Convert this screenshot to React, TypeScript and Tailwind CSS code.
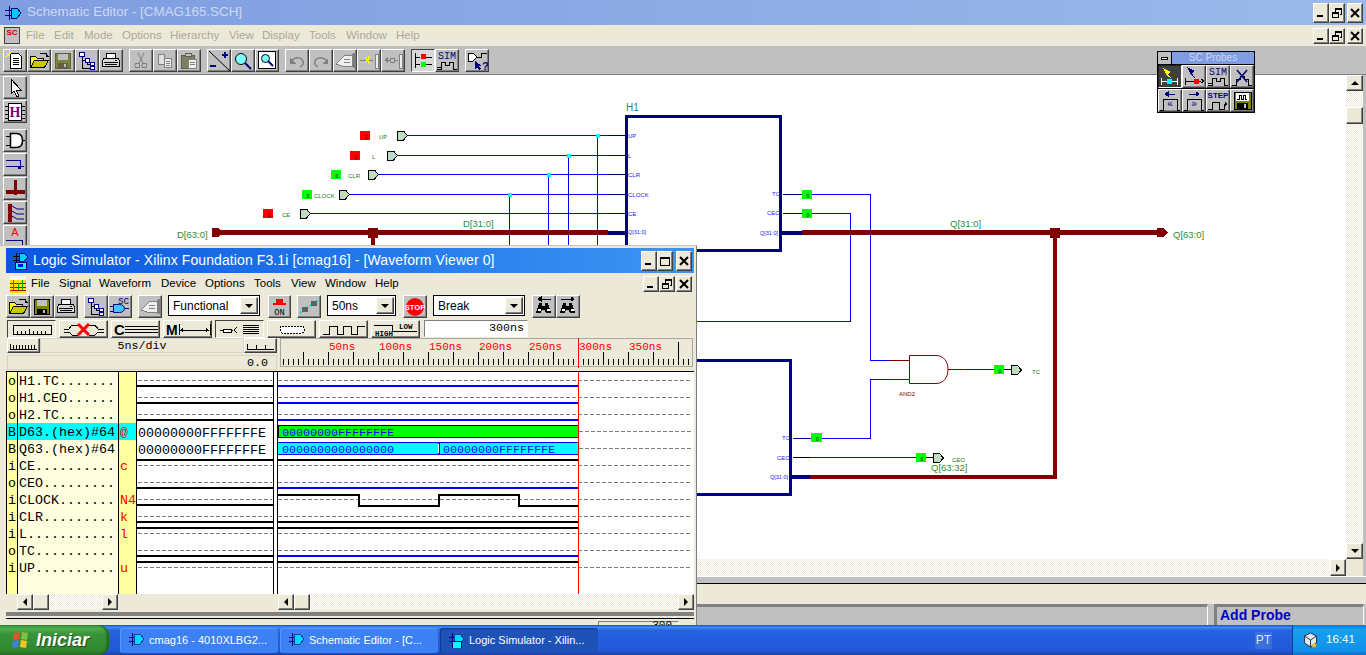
import type { ReactNode } from "react";

const raised =
  "border border-t-white border-l-white border-r-[#404040] border-b-[#404040] shadow-[inset_-1px_-1px_0_#808080]";
const sunken = "border border-t-[#808080] border-l-[#808080] border-r-white border-b-white";
const checker =
  "bg-[repeating-conic-gradient(#ece9d8_0_25%,#ffffff_0_50%)] bg-[length:2px_2px]";
const sans = "font-['Liberation_Sans',sans-serif]";
const mono = "font-['Liberation_Mono',monospace]";

function Ico({ w = 22, h = 21, children }: { w?: number; h?: number; children: ReactNode }) {
  return (
    <svg width={w} height={h} viewBox={`0 0 ${w} ${h}`} shapeRendering="crispEdges" className="block">
      {children}
    </svg>
  );
}

function WinBtn({ kind, small }: { kind: "min" | "max" | "restore" | "close"; small?: boolean }) {
  return (
    <div className={`${raised} bg-[#ece9d8] flex items-center justify-center ${small ? "w-[16px] h-[16px]" : "w-[16px] h-[20px]"}`}>
      <svg width="10" height="10" viewBox="0 0 10 10" shapeRendering="crispEdges">
        {kind === "min" && <rect x="1" y="7" width="6" height="2" fill="#000" />}
        {kind === "max" && <path d="M0.5 1.5h9v8h-9zM0 1h10v1H0z" fill="none" stroke="#000" />}
        {kind === "restore" && (
          <>
            <path d="M3.5 1.5h6v5h-2M3.5 1.5v2" fill="none" stroke="#000" />
            <path d="M3 0h7v2H3z" fill="#000" />
            <rect x="0.5" y="4.5" width="6" height="5" fill="#ece9d8" stroke="#000" />
            <rect x="0" y="4" width="7" height="2" fill="#000" />
          </>
        )}
        {kind === "close" && <path d="M1 1l8 8M9 1l-8 8" stroke="#000" strokeWidth="2" shapeRendering="auto" />}
      </svg>
    </div>
  );
}

function TBtn({ children, pressed, dark, w = "w-[24px]", h = "h-[23px]" }: { children?: ReactNode; pressed?: boolean; dark?: boolean; w?: string; h?: string }) {
  const look = dark
    ? "border border-t-[#202020] border-l-[#202020] border-r-white border-b-white bg-[#404040]"
    : pressed
      ? "border border-t-[#404040] border-l-[#404040] border-r-white border-b-white bg-[#d8d8d8]"
      : `${raised} bg-[#c0c0c0]`;
  return <div className={`${w} ${h} shrink-0 flex items-center justify-center ${look}`}>{children}</div>;
}

// toolbar drawings
const NewIco = () => (
  <Ico>
    <path d="M6.5 3.5h8l3 3v12h-11z" fill="#fff" stroke="#000" />
    <path d="M9 8h6M9 10h6M9 12h6M9 14h6" stroke="#000" />
    <path d="M2 3l4 2M5 0v4M8 1L5 5M1 7l4-2" stroke="#ff0" />
    <rect x="4" y="4" width="2" height="2" fill="#ff0" />
  </Ico>
);
const OpenIco = () => (
  <Ico>
    <path d="M2.5 6.5h5l2 2h6v9h-13z" fill="#ff0" stroke="#000" />
    <path d="M2.5 17.5l4-7h14l-4 7z" fill="#c8c800" stroke="#000" />
    <path d="M12 3h5l3 3M18 3v3h3" fill="none" stroke="#000" />
  </Ico>
);
const SaveIco = ({ c = "#000" }: { c?: string }) => (
  <Ico>
    <path d="M3.5 3.5h15v15h-15z" fill={c === "#000" ? "#808000" : "#808040"} stroke={c} />
    <rect x="6" y="4" width="10" height="6" fill="#c0c0c0" />
    <rect x="6" y="13" width="10" height="5" fill={c} />
    <rect x="12" y="14" width="2" height="3" fill="#c0c0c0" />
  </Ico>
);
const TreeIco = () => (
  <Ico>
    <path d="M6 6v12h10M6 10h5v4h5" fill="none" stroke="#000" />
    <rect x="3.5" y="2.5" width="5" height="4" fill="#fff" stroke="#000080" />
    <rect x="9.5" y="8.5" width="4" height="4" fill="#fff" stroke="#000080" />
    <rect x="14.5" y="12.5" width="4" height="3" fill="#fff" stroke="#000080" />
    <rect x="14.5" y="16.5" width="4" height="3" fill="#fff" stroke="#000080" />
  </Ico>
);
const PrintIco = () => (
  <Ico>
    <path d="M6.5 3.5h9v5h-9z" fill="#fff" stroke="#000" />
    <path d="M3.5 8.5h15l1 3v5h-17v-5z" fill="#d8d8d8" stroke="#000" />
    <path d="M4 12h14M5 14h12" stroke="#000" />
    <rect x="15" y="10" width="2" height="1" fill="#000" />
  </Ico>
);
const CutIco = () => (
  <Ico>
    <path d="M8 3l5 10M14 3L9 13" stroke="#808080" fill="none" shapeRendering="auto" />
    <circle cx="7.5" cy="15.5" r="2.5" fill="none" stroke="#808080" />
    <circle cx="14.5" cy="15.5" r="2.5" fill="none" stroke="#808080" />
  </Ico>
);
const CopyIco = () => (
  <Ico>
    <path d="M4.5 4.5h6v10h-6z" fill="#e0e0e0" stroke="#808080" />
    <path d="M10.5 8.5h7v9h-7z" fill="#f0f0f0" stroke="#808080" />
    <path d="M12 11h4M12 13h4M12 15h4" stroke="#808080" />
  </Ico>
);
const PasteIco = () => (
  <Ico>
    <path d="M3.5 5.5h13v13h-13z" fill="#808060" stroke="#606060" />
    <rect x="7" y="3" width="6" height="3" fill="#c0c0c0" stroke="#606060" />
    <path d="M10.5 9.5h8v9h-8z" fill="#f0f0f0" stroke="#808080" />
    <path d="M12 12h5M12 14h5" stroke="#808080" />
  </Ico>
);
const ScaleIco = () => (
  <Ico>
    <path d="M1 1l21 20" stroke="#000" shapeRendering="auto" />
    <path d="M14 5h6M17 2v6M2 16h6" stroke="#000080" strokeWidth="1.5" />
  </Ico>
);
const MagIco = () => (
  <Ico>
    <circle cx="9" cy="9" r="5.5" fill="#80ffff" stroke="#000" shapeRendering="auto" />
    <path d="M13 13l6 6" stroke="#000080" strokeWidth="2" shapeRendering="auto" />
  </Ico>
);
const MagBoxIco = () => (
  <Ico>
    <rect x="2.5" y="1.5" width="17" height="17" fill="#fff" stroke="#000" />
    <circle cx="9.5" cy="8.5" r="4" fill="#80ffff" stroke="#000" shapeRendering="auto" />
    <path d="M12 11l5 5" stroke="#000080" strokeWidth="2" shapeRendering="auto" />
  </Ico>
);
const UndoIco = ({ flip }: { flip?: boolean }) => (
  <Ico>
    <g transform={flip ? "translate(22 0) scale(-1 1)" : undefined}>
      <path d="M6 10c4-3 9-3 11 1 1 3-1 5-3 6" fill="none" stroke="#808080" strokeWidth="1.5" shapeRendering="auto" />
      <path d="M4 8v6h6z" fill="#808080" />
    </g>
  </Ico>
);
const HandIco = () => (
  <Ico>
    <path d="M2 14l8-8 8-1v11H8z" fill="#eee" stroke="#808080" />
    <path d="M19 3h2v15h-2z" fill="#808080" />
    <path d="M10 9h6M10 12h6" stroke="#808080" />
  </Ico>
);
const StarBarIco = () => (
  <Ico>
    <path d="M2 10h13" stroke="#808080" />
    <path d="M7 7l5 6M12 7l-5 6M10 6v8" stroke="#ff0" />
    <rect x="17" y="4" width="3" height="14" fill="#eee" stroke="#808080" />
  </Ico>
);
const ArrBarIco = () => (
  <Ico>
    <path d="M2 10l4-4v8z" fill="#808080" />
    <path d="M6 10h10" stroke="#808080" />
    <rect x="8" y="8" width="4" height="4" fill="#c0c0c0" stroke="#808080" />
    <rect x="17" y="4" width="3" height="14" fill="#eee" stroke="#808080" />
  </Ico>
);
const LightIco = () => (
  <Ico>
    <path d="M3 3v15M3 7h5M3 14h5M14 7h6M14 14h6" stroke="#000" />
    <rect x="9" y="4" width="5" height="5" fill="#f00" />
    <rect x="9" y="12" width="5" height="5" fill="#0f0" />
  </Ico>
);
const SimIco = ({ label = "SIM" }: { label?: string }) => (
  <Ico>
    <text x="11" y="9" textAnchor="middle" fontSize="10" fontFamily="Liberation Mono" fill="#000080">{label}</text>
    <path d="M1 19h4v-7h4v3h4v-3h4v7h4M1 17h4" fill="none" stroke="#000" />
  </Ico>
);
const QueryIco = () => (
  <Ico>
    <path d="M2 3h5l4 4-4 4H2z" fill="#fff" stroke="#000" />
    <path d="M11 7h4V3h6" fill="none" stroke="#000" />
    <path d="M9 11v8l2-2 2 3 2-1-2-3h3z" fill="#000080" />
    <text x="16" y="20" fontSize="11" fontWeight="700" fontFamily="Liberation Sans" fill="#000080">?</text>
  </Ico>
);

function Probes() {
  return (
    <div className="absolute left-[1157px] top-[51px] w-[98px] h-[62px] bg-black p-px flex flex-col gap-px z-10">
      <div className="flex h-[12px] gap-px">
        <div className="w-[13px] bg-[#c0c0c0] flex items-center justify-center">
          <div className="w-[7px] h-[3px] border border-black bg-white" />
        </div>
        <div className={`flex-1 bg-[#7f9de0] text-[#cdd9f2] text-[10px] leading-[12px] text-center ${sans}`}>SC Probes</div>
      </div>
      <div className="flex">
        <TBtn dark>
          <Ico>
            <path d="M4 2l8 4-3 2 3 4-4-2z" fill="#ff0" />
            <path d="M2 12v7M2 15h16M18 12v7" stroke="#fff" />
            <rect x="8" y="13" width="5" height="5" fill="#0ff" />
          </Ico>
        </TBtn>
        <TBtn>
          <Ico>
            <path d="M4 1l8 4-3 2 3 5-4-3z" fill="#000080" />
            <path d="M2 12v7M2 15h16M18 13l3 2-3 2" fill="none" stroke="#000" />
            <rect x="11" y="13" width="5" height="5" fill="#f00" />
          </Ico>
        </TBtn>
        <TBtn><SimIco /></TBtn>
        <TBtn>
          <Ico>
            <path d="M1 19h4v-6h4v-3h4v3h4v6h4" fill="none" stroke="#000" />
            <path d="M6 4l10 12M16 4L6 16" stroke="#000080" strokeWidth="1.5" shapeRendering="auto" />
          </Ico>
        </TBtn>
      </div>
      <div className="flex">
        <TBtn>
          <Ico>
            <path d="M6 4h10M6 4l3-2v4z" stroke="#000080" />
            <path d="M1 20h3V9h14v11h3" fill="none" stroke="#000" />
            <text x="11" y="17" textAnchor="middle" fontSize="10" fontFamily="Liberation Sans" fill="#000080">«</text>
          </Ico>
        </TBtn>
        <TBtn>
          <Ico>
            <path d="M6 4h10M16 4l-3-2v4z" stroke="#000080" />
            <path d="M1 20h3V9h14v11h3" fill="none" stroke="#000" />
            <text x="11" y="17" textAnchor="middle" fontSize="10" fontFamily="Liberation Sans" fill="#000080">»</text>
          </Ico>
        </TBtn>
        <TBtn>
          <Ico>
            <text x="11" y="8" textAnchor="middle" fontSize="8" fontWeight="700" fontFamily="Liberation Sans" fill="#000080">STEP</text>
            <path d="M1 19h4v-7h7v7h5v-5h2" fill="none" stroke="#000" />
            <path d="M18 12l3 2-3 2z" fill="#000" />
          </Ico>
        </TBtn>
        <TBtn>
          <Ico>
            <rect x="3" y="2" width="17" height="17" fill="#808000" stroke="#000" />
            <rect x="5" y="3" width="13" height="8" fill="#fff" />
            <path d="M6 9h2V5h2v4h2V5h2v4h2" fill="none" stroke="#000" />
            <rect x="6" y="13" width="11" height="6" fill="#000" />
            <rect x="13" y="14" width="2" height="4" fill="#c0c0c0" />
          </Ico>
        </TBtn>
      </div>
    </div>
  );
}

const MiniGate = ({ x, y }: { x: number; y: number }) => (
  <path d={`M${x + 0.5} ${y + 0.5}h6l4 4.5-4 4.5h-6z`} fill="#c0dcc0" stroke="#000" strokeWidth="1" />
);

function Box({ x, y, w = 10, h = 9, on }: { x: number; y: number; w?: number; h?: number; on?: boolean }) {
  return (
    <>
      <rect x={x} y={y} width={w} height={h} fill={on ? "#ff0000" : "#00ff00"} />
      <text x={x + w / 2 + 1} y={y + h - 1} fontSize="5" textAnchor="middle" fill="#000">{on ? "1" : "0"}</text>
    </>
  );
}

const Lbl = ({ x, y, s = 6, c = "#0f7a20", children }: { x: number; y: number; s?: number; c?: string; children: string }) => (
  <text x={x} y={y} fontSize={s} fill={c}>{children}</text>
);

function Schematic() {
  const navy = "#000080";
  const maroon = "#800000";
  const blue = "#0000ff";
  return (
    <svg width="1316" height="484" viewBox="30 75 1316 484" className={`block ${sans}`} shapeRendering="crispEdges">
      {/* H1 */}
      <path d="M626.5 250.5V116.5H780.5V250.5H690" fill="none" stroke={navy} strokeWidth="3" />
      <text x="626" y="111" fontSize="10" fill="#2f8a5a">H1</text>
      {/* inputs */}
      {[
        { y: 135.5, gx: 397, bx: 360, on: true, t: "UP", tx: 379 },
        { y: 155.5, gx: 387, bx: 350, on: true, t: "L", tx: 372 },
        { y: 174.5, gx: 368, bx: 331, on: false, t: "CLR", tx: 348 },
        { y: 194.5, gx: 339, bx: 302, on: false, t: "CLOCK", tx: 314 },
        { y: 213.5, gx: 300, bx: 263, on: true, t: "CE", tx: 282 },
      ].map((p) => (
        <g key={p.t}>
          <path d={`M${p.gx + 10} ${p.y}H608`} stroke={blue} />
          <path d={`M608 ${p.y}H625`} stroke="#000060" />
          <MiniGate x={p.gx} y={p.y - 5} />
          <Box x={p.bx} y={p.y - 5} on={p.on} />
          <Lbl x={p.tx} y={p.y + 3}>{p.t}</Lbl>
          <text x="628" y={p.y + 2} fontSize="6" fill="#2020ff">{p.t}</text>
        </g>
      ))}
      <text x="628" y="234" fontSize="5.5" fill="#2020ff">Q[31:0]</text>
      {[
        { x: 509.5, y: 194.5 },
        { x: 548.5, y: 174.5 },
        { x: 568.5, y: 155.5 },
        { x: 597.5, y: 135.5 },
      ].map((v) => (
        <g key={v.x}>
          <path d={`M${v.x} ${v.y}V250`} stroke={blue} />
          <rect x={v.x - 2} y={v.y - 2} width="4" height="4" fill="#00ffff" />
        </g>
      ))}
      {/* input bus */}
      <path d="M212 228h6l4 3v3l-4 3h-6z" fill={maroon} />
      <rect x="220" y="230" width="388" height="5" fill={maroon} />
      <rect x="608" y="231" width="18" height="4" fill={navy} />
      <rect x="368" y="228" width="10" height="10" fill={maroon} />
      <rect x="371" y="238" width="4" height="10" fill={maroon} />
      <text x="177" y="238" fontSize="9.5" fill="#2f8a3a">D[63:0]</text>
      <text x="463" y="227" fontSize="9.5" fill="#2f8a3a">D[31:0]</text>
      {/* H1 outputs */}
      <text x="772" y="196" fontSize="6" fill="#2020ff">TC</text>
      <text x="767" y="215" fontSize="6" fill="#2020ff">CEO</text>
      <text x="760" y="235" fontSize="5.5" fill="#2020ff">Q[31:0]</text>
      <path d="M783 194.5H802M783 213.5H802" stroke="#000060" />
      <path d="M812 194.5H870.5V360.5H889" fill="none" stroke={blue} />
      <path d="M812 213.5H850.5V321.5H690" fill="none" stroke={blue} />
      <Box x={802} y={190} />
      <Box x={802} y={209} />
      <rect x="781" y="231" width="21" height="4" fill={navy} />
      <rect x="802" y="230" width="355" height="5" fill={maroon} />
      <path d="M1157 228h6l5 4.5-5 4.5h-6z" fill={maroon} />
      <rect x="1050" y="228" width="10" height="10" fill={maroon} />
      <rect x="1053" y="238" width="4" height="240" fill={maroon} />
      <text x="950" y="227" fontSize="9.5" fill="#2f8a3a">Q[31:0]</text>
      <text x="1173" y="238" fontSize="9.5" fill="#2f8a3a">Q[63:0]</text>
      {/* H2 */}
      <path d="M690 360.5H790.5V494.5H690" fill="none" stroke={navy} strokeWidth="3" />
      <text x="782" y="440" fontSize="6" fill="#2020ff">TC</text>
      <text x="777" y="460" fontSize="6" fill="#2020ff">CEO</text>
      <text x="770" y="479" fontSize="5.5" fill="#2020ff">Q[31:0]</text>
      <path d="M793 438.5H811" stroke={navy} />
      <path d="M822 438.5H870.5V379.5H889" fill="none" stroke={blue} />
      <Box x={811} y={433} w={11} />
      {/* AND2 */}
      <path d="M889 360.5H909M889 379.5H909M948 369.5H967" stroke={maroon} />
      <path d="M909.5 355.5H936C944 355.5 948 362 948 369.5C948 377 944 383.5 936 383.5H909.5Z" fill="#fff" stroke={maroon} shapeRendering="auto" />
      <text x="899" y="396" fontSize="6" fill={maroon}>AND2</text>
      <path d="M967 369.5H994" stroke={blue} />
      <Box x={994} y={365} />
      <path d="M1004 369.5H1011" stroke="#000" />
      <MiniGate x={1011} y={365} />
      <Lbl x={1032} y={374}>TC</Lbl>
      {/* CEO output */}
      <path d="M793 457.5H810" stroke="#000" />
      <path d="M810 457.5H916" stroke={blue} />
      <Box x={916} y={453} />
      <path d="M926 457.5H933" stroke="#000" />
      <MiniGate x={933} y={453} />
      <Lbl x={952} y={462}>CEO</Lbl>
      <text x="931" y="471" fontSize="9.5" fill="#2f8a3a">Q[63:32]</text>
      {/* output bus */}
      <rect x="791" y="475" width="19" height="4" fill={navy} />
      <rect x="810" y="475" width="247" height="4" fill={maroon} />
    </svg>
  );
}

const rows = [
  { io: "o", name: "H1.TC.......", code: "" },
  { io: "o", name: "H1.CEO......", code: "" },
  { io: "o", name: "H2.TC.......", code: "" },
  { io: "B", name: "D63.(hex)#64", code: "@", sel: true },
  { io: "B", name: "Q63.(hex)#64", code: "" },
  { io: "i", name: "CE..........", code: "c" },
  { io: "o", name: "CEO.........", code: "" },
  { io: "i", name: "CLOCK.......", code: "N4" },
  { io: "i", name: "CLR.........", code: "k" },
  { io: "i", name: "L...........", code: "l" },
  { io: "o", name: "TC..........", code: "" },
  { io: "i", name: "UP..........", code: "u" },
];

// y of the trace in each row, page coordinates
const traces = [
  { y: 386, c: "#0000ff" },
  { y: 403, c: "#0000ff" },
  { y: 420, c: "#0000ff" },
  { y: 460, c: "#000000" },
  { y: 488, c: "#0000ff" },
  { y: 522, c: "#000000" },
  { y: 528, c: "#000000" },
  { y: 556, c: "#0000ff" },
  { y: 562, c: "#000000" },
];

const dashes = [0, 1, 2, 3, 4, 5, 6, 7, 8, 9, 10, 11].map((i) => 381 + 17 * i);

function ValueColumn() {
  return (
    <svg width="136" height="222" viewBox="137 372 136 222" className={`block ${mono}`} shapeRendering="crispEdges">
      {dashes.map((y) =>
        y === 432 || y === 449 ? null : <path key={y} d={`M138 ${y - 0.5}H272`} stroke="#808080" strokeDasharray="4 2" />
      )}
      {traces.map((t) => (
        <rect key={t.y} x="137" y={t.y - 1} width="136" height="2" fill="#000" />
      ))}
      <rect x="137" y="504" width="136" height="2" fill="#000" />
      <text x="138" y="437" fontSize="13.33" fill="#000">00000000FFFFFFFE</text>
      <text x="138" y="454" fontSize="13.33" fill="#000">00000000FFFFFFFE</text>
    </svg>
  );
}

function WaveColumn() {
  return (
    <svg width="416" height="222" viewBox="278 372 416 222" className={`block ${mono}`} shapeRendering="crispEdges">
      {dashes.map((y) => (
        <path key={y} d={`M${y === 432 || y === 449 ? 579 : 278} ${y - 0.5}H692`} stroke="#808080" strokeDasharray="4 2" />
      ))}
      {traces.map((t) => (
        <rect key={t.y} x="278" y={t.y - 1} width="300" height="2" fill={t.c} />
      ))}
      {/* D63 */}
      <rect x="278.5" y="425.5" width="300" height="12" fill="#00ff00" stroke="#000" />
      <text x="282" y="435.5" fontSize="11.67" fill="#0000ff">00000000FFFFFFFE</text>
      {/* Q63 */}
      <rect x="278" y="442" width="160" height="13" fill="#00ffff" />
      <rect x="440" y="442" width="138" height="13" fill="#00ffff" />
      <path d="M278 442.5H438l1 1 1-1H578M278 454.5H438l1-1 1 1H578M439 443V454" fill="none" stroke="#0000ff" />
      <text x="282" y="452.5" fontSize="11.67" fill="#0000ff">0000000000000000</text>
      <text x="443" y="452.5" fontSize="11.67" fill="#0000ff">00000000FFFFFFFE</text>
      {/* CLOCK */}
      <path d="M278 494.5H358.5V505.5H438.5V494.5H518.5V505.5H578" fill="none" stroke="#000" strokeWidth="2" />
      <path d="M578.5 372V594" stroke="#ff0000" />
    </svg>
  );
}

function Ruler() {
  const ticks = [];
  for (let x = 283; x < 692; x += 5) {
    const n = x - 278;
    ticks.push(<path key={x} d={`M${x + 0.5} ${x === 678 ? 345 : n % 25 === 0 ? 355 : 362}V368`} stroke="#000" />);
  }
  return (
    <svg width="414" height="30" viewBox="279 341 414 30" className={`block ${mono}`} shapeRendering="crispEdges">
      <rect x="280.5" y="341.5" width="412" height="28" fill="#ece9d8" stroke="#aca899" />
      {ticks}
      {[50, 100, 150, 200, 250, 300, 350].map((n) => (
        <text key={n} x={278 + n + 1} y="353" fontSize="11" fill="#ff0000">{`${n}ns`}</text>
      ))}
      <path d="M578.5 341V371" stroke="#ff0000" />
    </svg>
  );
}

function Combo({ w, text }: { w: string; text: string }) {
  return (
    <div className={`${w} h-[21px] shrink-0 border border-black bg-white flex items-center justify-between pl-[4px] pr-px`}>
      <span className="text-[12px]">{text}</span>
      <div className={`${raised} w-[18px] h-[17px] bg-[#ece9d8] flex items-center justify-center`}>
        <div className="w-0 h-0 border-x-[4px] border-x-transparent border-t-[4px] border-t-black" />
      </div>
    </div>
  );
}

function ScrollArrow({ dir, w = "w-[16px]", h = "h-[16px]" }: { dir: "l" | "r" | "u" | "d"; w?: string; h?: string }) {
  const tri = {
    l: "border-y-[4px] border-y-transparent border-r-[4px] border-r-black",
    r: "border-y-[4px] border-y-transparent border-l-[4px] border-l-black",
    u: "border-x-[4px] border-x-transparent border-b-[4px] border-b-black",
    d: "border-x-[4px] border-x-transparent border-t-[4px] border-t-black",
  }[dir];
  return (
    <div className={`${raised} ${w} ${h} shrink-0 bg-[#ece9d8] flex items-center justify-center`}>
      <div className={`w-0 h-0 ${tri}`} />
    </div>
  );
}

const Thumb = ({ className }: { className: string }) => <div className={`${raised} bg-[#ece9d8] shrink-0 ${className}`} />;

function Wide({ children, pressed }: { children: ReactNode; pressed?: boolean }) {
  return (
    <div
      className={`w-[49px] h-[18px] shrink-0 flex items-center justify-center ${
        pressed ? "border border-t-[#404040] border-l-[#404040] border-r-white border-b-white bg-[#ece9d8]" : `${raised} bg-[#ece9d8]`
      }`}
    >
      <svg width="46" height="15" viewBox="0 0 46 15" shapeRendering="crispEdges" className="block">
        {children}
      </svg>
    </div>
  );
}

function SimWindow() {
  return (
    <div className={`absolute left-0 top-[245px] w-[697px] h-[380px] bg-[#ece9d8] border-r border-r-[#808080] border-t border-t-[#c8c5b4] pt-[2px] pl-[6px] pr-[2px] flex flex-col z-20 ${sans}`}>
      {/* title */}
      <div className="h-[25px] shrink-0 flex items-center bg-gradient-to-r from-[#0a55e0] to-[#3d95f3] pr-[2px]">
        <div className="w-[27px] pl-[6px]">
          <svg width="18" height="18" viewBox="0 0 18 18" shapeRendering="crispEdges" className="block">
            <path d="M1 4h6M1 8h6M4 1v9" stroke="#000" />
            <path d="M7 1h5l4 4-4 4H7z" fill="#00d0ff" stroke="#000080" />
            <rect x="3" y="10" width="11" height="7" fill="#00ffff" stroke="#000080" />
            <rect x="6" y="12" width="5" height="3" fill="#0000ff" />
          </svg>
        </div>
        <span className="text-white text-[14px] tracking-[0.1px]">Logic Simulator - Xilinx Foundation F3.1i [cmag16] - [Waveform Viewer 0]</span>
        <div className="ml-auto flex">
          <WinBtn kind="min" />
          <WinBtn kind="max" />
          <div className="w-[3px]" />
          <WinBtn kind="close" />
        </div>
      </div>
      {/* menu */}
      <div className="h-[22px] shrink-0 flex items-center text-[11.5px] text-black relative">
        <div className="w-[16px] h-[17px] ml-[4px] mr-[5px] shrink-0">
          <svg width="16" height="17" viewBox="0 0 16 17" shapeRendering="crispEdges" className="block">
            <rect width="16" height="4" fill="#fff" />
            <rect y="4" width="16" height="13" fill="#ffe000" />
            <path d="M0 7h16M0 11h16M0 14h16" stroke="#c00000" />
            <path d="M3 4v10M8 7v7M12 4v10" stroke="#00a000" />
          </svg>
        </div>
        {[
          ["File", "w-[28px]"],
          ["Signal", "w-[40px]"],
          ["Waveform", "w-[62px]"],
          ["Device", "w-[44px]"],
          ["Options", "w-[49px]"],
          ["Tools", "w-[37px]"],
          ["View", "w-[34px]"],
          ["Window", "w-[50px]"],
          ["Help", "w-[30px]"],
        ].map(([t, w]) => (
          <span key={t} className={`${w} shrink-0`}>{t}</span>
        ))}
        <div className="ml-auto flex mr-[2px]">
          <WinBtn kind="min" small />
          <WinBtn kind="restore" small />
          <div className="w-[1px]" />
          <WinBtn kind="close" small />
        </div>
      </div>
      {/* toolbar */}
      <div className="h-[25px] shrink-0 flex items-start text-[12px]">
        <TBtn><OpenIco /></TBtn>
        <TBtn><SaveIco /></TBtn>
        <TBtn><PrintIco /></TBtn>
        <div className="w-[6px]" />
        <TBtn><TreeIco /></TBtn>
        <TBtn>
          <Ico>
            <text x="9" y="8" fontSize="9" fontFamily="Liberation Mono" fill="#000080">SC</text>
            <path d="M1 10h3M1 15h3M16 12h4" stroke="#000080" />
            <path d="M4.5 8.5h6c3 0 5 2 5 4s-2 4-5 4h-6z" fill="#40c8ff" stroke="#000080" shapeRendering="auto" />
          </Ico>
        </TBtn>
        <div className="w-[6px]" />
        <TBtn><HandIco /></TBtn>
        <div className="w-[6px]" />
        <Combo w="w-[92px]" text="Functional" />
        <div className="w-[8px]" />
        <TBtn w="w-[23px]">
          <Ico>
            <path d="M7 3h8v4h3v2H4V7h3z" fill="#f00" />
            <text x="11" y="19" textAnchor="middle" fontSize="9" fontFamily="Liberation Mono" fill="#000">ON</text>
          </Ico>
        </TBtn>
        <div className="w-[6px]" />
        <TBtn>
          <Ico>
            <path d="M2 17L20 4" stroke="#00e0e0" strokeDasharray="2 2" strokeWidth="2" />
            <rect x="4" y="11" width="6" height="5" fill="#606060" />
            <rect x="13" y="5" width="6" height="5" fill="#606060" />
          </Ico>
        </TBtn>
        <div className="w-[6px]" />
        <Combo w="w-[69px]" text="50ns" />
        <div className="w-[7px]" />
        <TBtn>
          <svg width="20" height="20" viewBox="0 0 20 20" className="block">
            <circle cx="10" cy="10" r="9" fill="#f00" />
            <text x="10" y="13" textAnchor="middle" fontSize="7.5" fontWeight="700" fontFamily="Liberation Sans" fill="#fff">STOP</text>
          </svg>
        </TBtn>
        <div className="w-[6px]" />
        <Combo w="w-[92px]" text="Break" />
        <div className="w-[7px]" />
        {[false, true].map((right) => (
          <TBtn key={String(right)}>
            <Ico>
              <path d={right ? "M4 3h13M17 3l-3-2v4z" : "M5 3h13M5 3l3-2v4z"} stroke="#000" />
              <path d="M6 7h3v3h3V7h3l3 10h-5l-1-3h-3l-1 3H3z" fill="#000" />
              <rect x="5" y="13" width="3" height="2" fill="#fff" />
              <rect x="14" y="13" width="3" height="2" fill="#fff" />
            </Ico>
          </TBtn>
        ))}
      </div>
      {/* second toolbar */}
      <div className="h-[18px] shrink-0 flex items-start gap-[3px] pl-px">
        <Wide pressed>
          <path d="M4 3.5h38v9H4z" fill="none" stroke="#000" />
          <path d="M8 9v3M12 9v3M16 9v3M20 7v5M24 9v3M28 9v3M32 9v3M36 9v3" stroke="#000" />
        </Wide>
        <Wide>
          <path d="M3 7h5l3-4h6M3 10h5l3 3h6M28 3h6l3 4h6M28 13h6l3-3h6" fill="none" stroke="#000" />
          <path d="M17 2l11 11M28 2L17 13" stroke="#ff0000" strokeWidth="3" shapeRendering="auto" />
        </Wide>
        <Wide>
          <text x="1" y="13" fontSize="15" fontWeight="700" fontFamily="Liberation Sans" fill="#000">C</text>
          <path d="M12 4h33M12 7h33M12 10h33" stroke="#000" />
        </Wide>
        <Wide>
          <text x="1" y="13" fontSize="14" fontWeight="700" fontFamily="Liberation Sans" fill="#000">M</text>
          <path d="M14 2v11M45 2v11M15 8h29" stroke="#000" />
          <path d="M15 8l3-2v4zM44 8l-3-2v4z" fill="#000" />
        </Wide>
        <Wide pressed>
          <path d="M3 8h13M20 5l-3 3 3 3" fill="none" stroke="#000" />
          <rect x="6" y="7" width="8" height="3" fill="#fff" stroke="#000" />
          <path d="M26 3h16M26 5h16M26 7h16M26 9h16M26 11h16" stroke="#000" />
        </Wide>
        <Wide>
          <rect x="11" y="4" width="24" height="7" rx="2" fill="#fff" stroke="#000" strokeDasharray="2 1" />
        </Wide>
        <Wide>
          <path d="M2 12h6V4h8v8h6V4h8v8h6V4h8" fill="none" stroke="#000" />
        </Wide>
        <Wide>
          <text x="2" y="14" fontSize="7.5" fontWeight="700" fontFamily="Liberation Mono" fill="#000">HIGH</text>
          <text x="26" y="7" fontSize="7.5" fontWeight="700" fontFamily="Liberation Mono" fill="#000">LOW</text>
          <path d="M1 3h18v6h25" fill="none" stroke="#000" />
        </Wide>
        <div className={`${sunken} ml-[1px] w-[104px] h-[17px] bg-white flex items-center justify-end pr-[3px] text-[11.7px] ${mono}`}>300ns</div>
      </div>
      {/* zoom + ruler */}
      <div className="h-[33px] shrink-0 flex">
        <div className="w-[270px] ml-px flex flex-col">
          <div className="h-[15px] flex">
            <div className={`${raised} w-[33px] bg-[#ece9d8] flex items-center justify-center`}>
              <svg width="27" height="8" viewBox="0 0 27 8" shapeRendering="crispEdges" className="block">
                <path d="M0 2v5H27V2M3 3v4M6 3v4M9 3v4M12 3v4M15 3v4M18 3v4M21 3v4M24 3v4" fill="none" stroke="#000" />
              </svg>
            </div>
            <div className={`flex-1 border border-[#d8d5c4] text-[11.7px] leading-[15px] text-center ${mono}`}>5ns/div</div>
            <div className={`${raised} w-[33px] bg-[#ece9d8] flex items-center justify-center`}>
              <svg width="27" height="8" viewBox="0 0 27 8" shapeRendering="crispEdges" className="block">
                <path d="M0 2v5H27V2M9 3v4M18 3v4" fill="none" stroke="#000" />
              </svg>
            </div>
          </div>
          <div className={`mt-[2px] h-[15px] border border-[#d8d5c4] text-[11.7px] leading-[15px] text-right pr-[8px] ${mono}`}>0.0</div>
        </div>
        <div className="ml-[2px]">
          <Ruler />
        </div>
      </div>
      {/* list and waves */}
      <div className="h-[223px] shrink-0 flex bg-white border-t border-t-black border-l border-l-black">
        <div className={`w-[130px] shrink-0 flex flex-col text-[13.33px] leading-[19px] ${mono}`}>
          {rows.map((r) => (
            <div key={r.name} className="h-[17px] flex shrink-0">
              <div className={`w-[11px] border-r border-r-black text-center ${r.sel ? "bg-[#00ffff]" : "bg-[#ffffa0]"}`}>{r.io}</div>
              <div className={`w-[101px] border-r border-r-black pl-px ${r.sel ? "bg-[#00ffff]" : "bg-[#ffffe0]"}`}>{r.name}</div>
              <div className={`w-[18px] border-r border-r-black text-[#ff0000] pl-px whitespace-nowrap ${r.sel ? "bg-[#00ffff]" : "bg-[#ffffa0]"}`}>{r.code}</div>
            </div>
          ))}
          <div className="flex-1 flex">
            <div className="w-[11px] border-r border-r-black bg-[#ffffa0]" />
            <div className="w-[101px] border-r border-r-black bg-[#ffffe0]" />
            <div className="w-[18px] border-r border-r-black bg-[#ffffa0]" />
          </div>
        </div>
        <ValueColumn />
        <div className="w-[5px] shrink-0 border-x border-x-black" />
        <WaveColumn />
      </div>
      {/* scrollers */}
      <div className="h-[16px] shrink-0 flex bg-[#ece9d8]">
        <div className="w-[11px] shrink-0" />
        <div className={`w-[101px] shrink-0 flex ${checker}`}>
          <ScrollArrow dir="l" />
          <Thumb className="w-[16px]" />
          <div className="flex-1" />
          <ScrollArrow dir="r" />
        </div>
        <div className="w-[160px] shrink-0" />
        <div className={`flex-1 flex ${checker}`}>
          <ScrollArrow dir="l" />
          <Thumb className="w-[16px]" />
          <div className="flex-1" />
          <ScrollArrow dir="r" />
        </div>
      </div>
      {/* bottom frame */}
      <div className="h-[2px] shrink-0" />
      <div className="h-[4px] shrink-0 bg-[#808080]" />
      <div className="h-[2px] shrink-0 bg-[#ece9d8]" />
      <div className="h-px shrink-0 bg-black" />
      <div className="flex-1 overflow-hidden relative">
        <div className={`${sunken} absolute left-[592px] top-[2px] w-[81px] h-[16px] text-right pr-[6px] text-[11px] leading-[6px] ${mono}`}>300</div>
      </div>
    </div>
  );
}

function TaskBtn({ label, active, sim }: { label: string; active?: boolean; sim?: boolean }) {
  return (
    <div
      className={`h-[25px] w-[158px] shrink-0 rounded-[3px] flex items-center gap-[4px] pl-[9px] text-[11px] text-white whitespace-nowrap ${
        active ? "bg-[#1e52b7] shadow-[inset_1px_1px_1px_#123a8a]" : "bg-[#3c81f3] shadow-[inset_1px_1px_0_#5a98f7]"
      }`}
    >
      <svg width="16" height="16" viewBox="0 0 16 16" shapeRendering="crispEdges" className="block shrink-0">
        <path d="M0 5h5M0 9h5M3 1v13" stroke="#000080" />
        <path d="M5 2h6l4 5-4 5H5z" fill="#00d8ff" stroke="#0040a0" />
        {sim && <rect x="3" y="9" width="9" height="7" fill="#00ffff" stroke="#000080" />}
      </svg>
      {label}
    </div>
  );
}

function Taskbar() {
  return (
    <div className={`h-[30px] shrink-0 relative z-30 flex items-center overflow-hidden bg-[linear-gradient(180deg,#1f4fb8_0%,#3f8cf3_8%,#2663e0_18%,#2258d8_85%,#1941a5_100%)] ${sans}`}>
      <div className="w-[109px] h-[30px] shrink-0 rounded-r-[10px] bg-[linear-gradient(180deg,#3c9a3c_0%,#4fae4f_12%,#3a933a_30%,#2f8a2f_85%,#256f25_100%)] flex items-center pl-[11px] gap-[5px] shadow-[inset_-2px_0_3px_#1f5f1f]">
        <svg width="20" height="20" viewBox="0 0 20 20" className="block shrink-0">
          <path d="M3 3l6-1-1 7-6 1z" fill="#e8502a" />
          <path d="M11 2l6 1-1 7-6-1z" fill="#7cc242" />
          <path d="M2 11l6-1-1 7-6 1z" fill="#3f7fe0" />
          <path d="M10 10l6 1-1 7-6-1z" fill="#f6c324" />
        </svg>
        <span className="text-white italic font-bold text-[18px] leading-none [text-shadow:1px_1px_1px_#1a4a1a]">Iniciar</span>
      </div>
      <div className="flex gap-[2px] ml-[11px]">
        <TaskBtn label="cmag16 - 4010XLBG2..." />
        <TaskBtn label="Schematic Editor - [C..." />
        <TaskBtn label="Logic Simulator - Xilin..." active sim />
      </div>
      <div className="ml-auto flex items-center h-full">
        <div className="w-[17px] h-[17px] bg-[#3c70d8] text-[#d8e8ff] text-[12px] leading-[17px] text-center mr-[20px]">PT</div>
        <div className="w-[74px] h-full bg-[linear-gradient(180deg,#0f7ad8_0%,#14a0f0_15%,#1290e9_85%,#0f6fc8_100%)] border-l border-l-[#0a3f90] flex items-center pl-[10px] gap-[8px] text-white text-[11.5px]">
          <svg width="15" height="16" viewBox="0 0 15 16" className="block shrink-0">
            <path d="M7.5 1l6 3v7l-6 4-6-4V4z" fill="#dfe8f5" stroke="#334" />
            <path d="M1.5 4l6 4 6-4M7.5 8v7" fill="none" stroke="#334" />
            <path d="M11 10l1 2 2 .4-1.5 1.4.4 2-1.9-1-1.9 1 .4-2L8 12.4l2-.4z" fill="#f8c020" />
          </svg>
          <span>16:41</span>
        </div>
      </div>
    </div>
  );
}

const VBar = () => (
  <div className="w-[17px] shrink-0 flex flex-col">
    <ScrollArrow dir="u" w="w-[17px]" />
    <div className={`h-[16px] ${checker}`} />
    <Thumb className="h-[17px] w-[17px]" />
    <div className={`flex-1 ${checker}`} />
    <ScrollArrow dir="d" w="w-[17px]" />
  </div>
);

export default function App() {
  const gray = "text-[#aca899]";
  return (
    <div className={`relative w-[1366px] h-[655px] overflow-hidden flex flex-col bg-[#ece9d8] ${sans}`}>
      {/* schematic title */}
      <div className="h-[25px] shrink-0 flex items-center bg-gradient-to-r from-[#7f9de0] to-[#9bb9ea] pr-[3px]">
        <div className="w-[27px] pl-[5px]">
          <svg width="17" height="16" viewBox="0 0 17 16" shapeRendering="crispEdges" className="block">
            <path d="M0 5h6M0 10h6M4 1v14" stroke="#000080" />
            <path d="M6 3h6l4 5-4 5H6z" fill="#00c8ff" stroke="#000080" />
          </svg>
        </div>
        <span className="text-[#cdd9f2] text-[13.4px]">Schematic Editor - [CMAG165.SCH]</span>
        <div className="ml-auto flex">
          <WinBtn kind="min" />
          <WinBtn kind="restore" />
          <div className="w-[2px]" />
          <WinBtn kind="close" />
        </div>
      </div>
      {/* menu */}
      <div className="h-[21px] shrink-0 flex items-center text-[11.5px] pr-[3px]">
        <div className="w-[16px] h-[17px] ml-[4px] mr-[6px] shrink-0 bg-[#c0c0c0] border border-[#404040] flex items-start justify-center overflow-hidden">
          <span className="text-[8px] leading-[9px] font-bold text-[#c00000]">SC</span>
        </div>
        {[
          ["File", "w-[28px]"],
          ["Edit", "w-[30px]"],
          ["Mode", "w-[38px]"],
          ["Options", "w-[48px]"],
          ["Hierarchy", "w-[59px]"],
          ["View", "w-[33px]"],
          ["Display", "w-[47px]"],
          ["Tools", "w-[37px]"],
          ["Window", "w-[50px]"],
          ["Help", "w-[30px]"],
        ].map(([t, w]) => (
          <span key={t} className={`${w} shrink-0 ${gray}`}>{t}</span>
        ))}
        <div className="ml-auto flex">
          <WinBtn kind="min" small />
          <WinBtn kind="restore" small />
          <div className="w-[2px]" />
          <WinBtn kind="close" small />
        </div>
      </div>
      {/* toolbar */}
      <div className="h-[29px] shrink-0 bg-[#c0c0c0] border-b border-b-[#808080] pt-[3px] pl-[3px] flex items-start">
        <TBtn><NewIco /></TBtn>
        <TBtn><OpenIco /></TBtn>
        <TBtn><SaveIco c="#606040" /></TBtn>
        <TBtn><TreeIco /></TBtn>
        <TBtn><PrintIco /></TBtn>
        <div className="w-[6px]" />
        <TBtn><CutIco /></TBtn>
        <TBtn><CopyIco /></TBtn>
        <TBtn><PasteIco /></TBtn>
        <div className="w-[6px]" />
        <TBtn><ScaleIco /></TBtn>
        <TBtn><MagIco /></TBtn>
        <TBtn><MagBoxIco /></TBtn>
        <div className="w-[6px]" />
        <TBtn><UndoIco /></TBtn>
        <TBtn><UndoIco flip /></TBtn>
        <TBtn><HandIco /></TBtn>
        <TBtn><StarBarIco /></TBtn>
        <TBtn><ArrBarIco /></TBtn>
        <div className="w-[6px]" />
        <TBtn pressed><LightIco /></TBtn>
        <TBtn><SimIco /></TBtn>
        <div className="w-[6px]" />
        <TBtn><QueryIco /></TBtn>
      </div>
      {/* workspace */}
      <div className="h-[484px] shrink-0 flex bg-[#c0c0c0]">
        <div className="w-[30px] shrink-0 pl-[3px] pt-px flex flex-col">
          <TBtn>
            <Ico>
              <path d="M7 2v15l3-3 3 6 2-1-3-6h5z" fill="#fff" stroke="#000" />
            </Ico>
          </TBtn>
          <div className="h-px" />
          <TBtn>
            <Ico>
              <path d="M1 5h3M1 9h3M1 13h3M1 17h3M18 5h3M18 9h3M18 13h3M18 17h3" stroke="#000" />
              <rect x="4.5" y="2.5" width="13" height="17" fill="#fff" stroke="#000" />
              <text x="11" y="16" textAnchor="middle" fontSize="14" fontWeight="700" fontFamily="Liberation Serif" fill="#800080">H</text>
            </Ico>
          </TBtn>
          <div className="h-[6px]" />
          {[
            <Ico key="and">
              <path d="M6.5 3.5h6c4 0 6 3 6 7s-2 7-6 7h-6z" fill="#fff" stroke="#000" shapeRendering="auto" strokeWidth="1.5" />
              <path d="M2 6h4M2 15h4M18 10h3" stroke="#000" />
            </Ico>,
            <Ico key="net">
              <path d="M2 6h14v9M2 12h18" fill="none" stroke="#000080" />
              <rect x="14" y="12" width="3" height="3" fill="#000080" />
            </Ico>,
            <Ico key="bus">
              <rect x="10" y="2" width="3" height="15" fill="#800000" />
              <rect x="2" y="12" width="19" height="4" fill="#800000" />
            </Ico>,
            <Ico key="tap">
              <rect x="4" y="2" width="4" height="18" fill="#800000" />
              <path d="M8 4l5 3h7M8 9l5 3h7M8 14l5 3h7" fill="none" stroke="#000080" shapeRendering="auto" />
            </Ico>,
            <Ico key="lbl">
              <text x="11" y="10" textAnchor="middle" fontSize="11" fontFamily="Liberation Sans" fill="#ff0000">A</text>
              <path d="M2 14h16v6" fill="none" stroke="#000080" />
            </Ico>,
          ].map((ic, i) => (
            <div key={i} className="mb-px">
              <TBtn>{ic}</TBtn>
            </div>
          ))}
        </div>
        <div className="w-[1316px] shrink-0 bg-white">
          <Schematic />
        </div>
        <VBar />
        <div className="flex-1" />
      </div>
      {/* horizontal scroll of the editor */}
      <div className="h-[17px] shrink-0 flex pr-[3px] bg-[#c0c0c0]">
        <div className={`flex-1 ${checker}`} />
        <ScrollArrow dir="r" h="h-[17px]" />
        <div className="w-[17px] bg-[#ece9d8]" />
      </div>
      <div className="h-[7px] shrink-0 bg-[#c0c0c0] border-t border-t-white" />
      <div className="h-px shrink-0 bg-black" />
      <div className="h-[20px] shrink-0 bg-[#ece9d8]" />
      {/* status */}
      <div className="h-[21px] shrink-0 flex bg-[#c0c0c0] pl-[697px] pr-[2px] gap-[6px]">
        <div className="flex-1 border-t-[3px] border-t-[#808080] border-r border-r-white" />
        <div className="w-[150px] shrink-0 border-t-[3px] border-t-[#808080] border-l-[3px] border-l-[#808080] border-r border-r-white pl-[3px] text-[#0000c0] font-bold text-[14px] leading-[17px] whitespace-nowrap">
          Add Probe
        </div>
      </div>
      <Taskbar />
      <Probes />
      <SimWindow />
    </div>
  );
}
